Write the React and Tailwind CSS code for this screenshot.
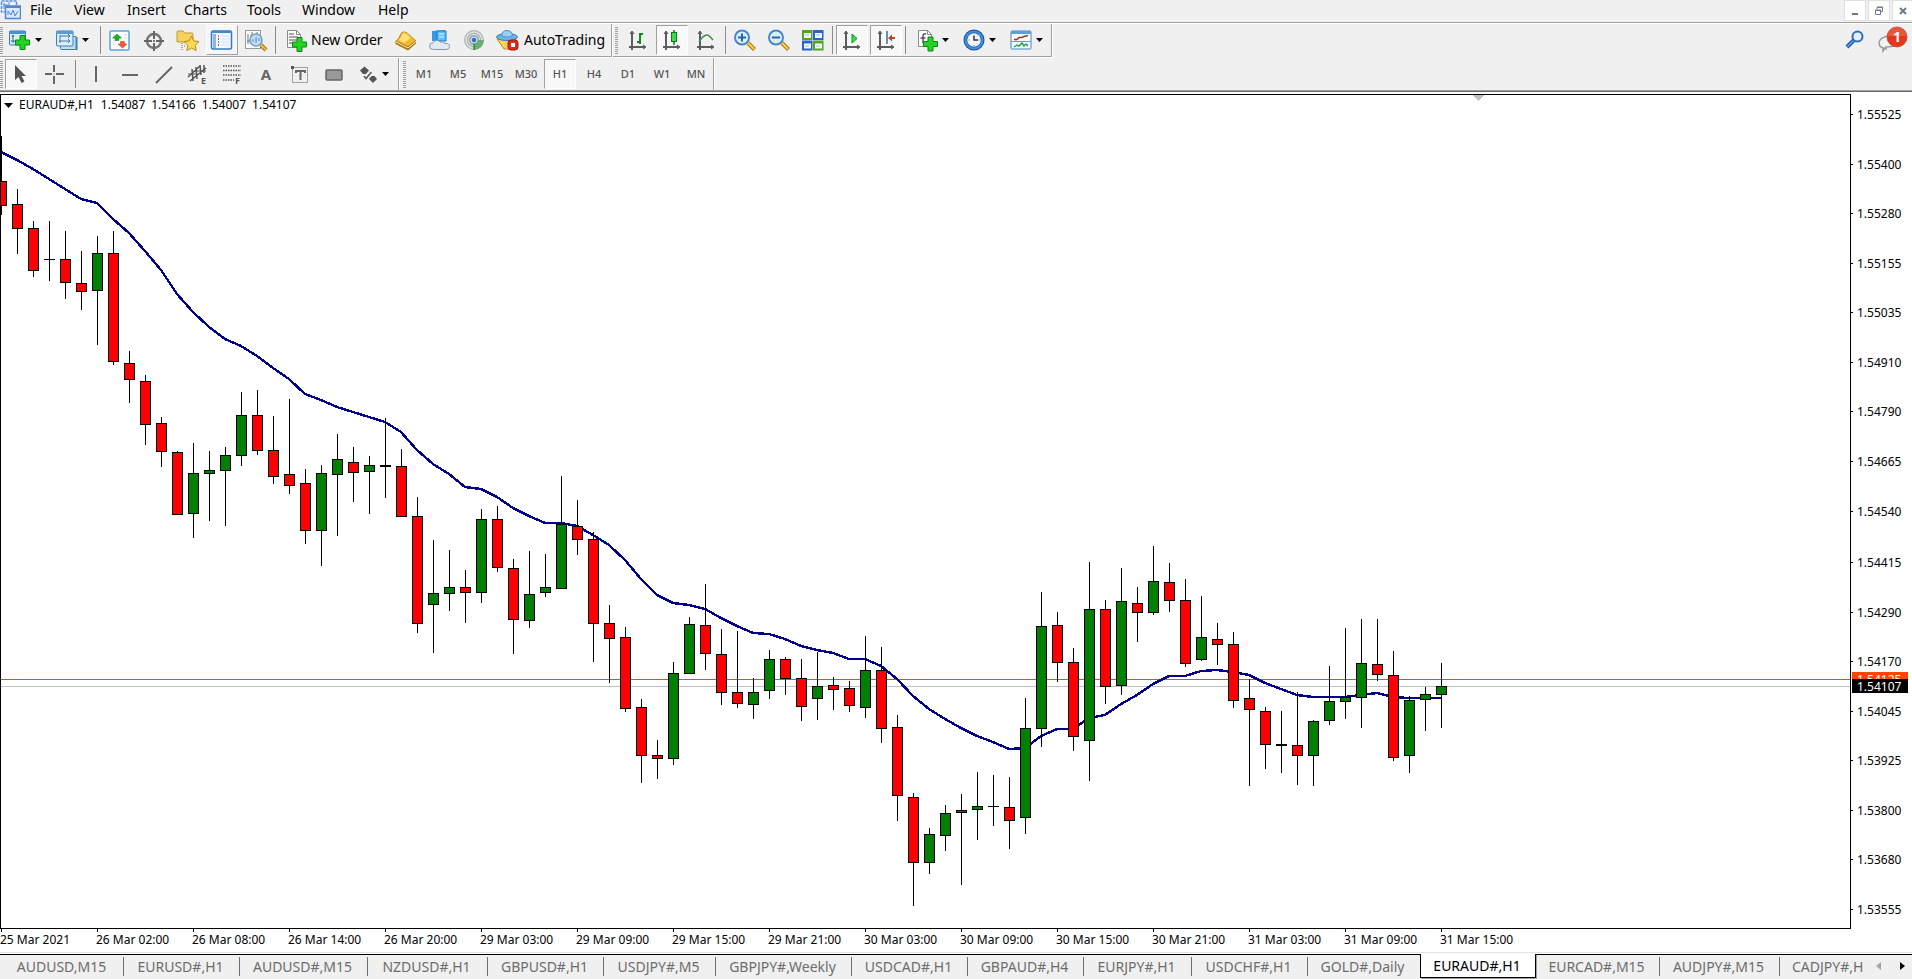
import React from 'react';
import clsx from 'clsx';

const MENU = [
  { label: 'File', width: 'w-[44px]' },
  { label: 'View', width: 'w-[53px]' },
  { label: 'Insert', width: 'w-[57px]' },
  { label: 'Charts', width: 'w-[63px]' },
  { label: 'Tools', width: 'w-[55px]' },
  { label: 'Window', width: 'w-[76px]' },
  { label: 'Help', width: 'w-[40px]' },
];

const TIMEFRAMES = ['M1', 'M5', 'M15', 'M30', 'H1', 'H4', 'D1', 'W1', 'MN'];

const TABS = [
  { label: 'AUDUSD,M15', width: 'w-[122px]' },
  { label: 'EURUSD#,H1', width: 'w-[116px]' },
  { label: 'AUDUSD#,M15', width: 'w-[128px]' },
  { label: 'NZDUSD#,H1', width: 'w-[120px]' },
  { label: 'GBPUSD#,H1', width: 'w-[116px]' },
  { label: 'USDJPY#,M5', width: 'w-[112px]' },
  { label: 'GBPJPY#,Weekly', width: 'w-[136px]' },
  { label: 'USDCAD#,H1', width: 'w-[116px]' },
  { label: 'GBPAUD#,H4', width: 'w-[116px]' },
  { label: 'EURJPY#,H1', width: 'w-[108px]' },
  { label: 'USDCHF#,H1', width: 'w-[116px]' },
  { label: 'GOLD#,Daily', width: 'w-[112px]' },
  { label: 'EURAUD#,H1', width: 'w-[116px]', active: true },
  { label: 'EURCAD#,M15', width: 'w-[124px]' },
  { label: 'AUDJPY#,M15', width: 'w-[120px]' },
];

const TIMES = [
  '25 Mar 2021', '26 Mar 02:00', '26 Mar 08:00', '26 Mar 14:00', '26 Mar 20:00',
  '29 Mar 03:00', '29 Mar 09:00', '29 Mar 15:00', '29 Mar 21:00', '30 Mar 03:00',
  '30 Mar 09:00', '30 Mar 15:00', '30 Mar 21:00', '31 Mar 03:00', '31 Mar 09:00',
  '31 Mar 15:00',
];

const PRICES = [
  ['1.55525', 114], ['1.55400', 164], ['1.55280', 213], ['1.55155', 263],
  ['1.55035', 312], ['1.54910', 362], ['1.54790', 411], ['1.54665', 461],
  ['1.54540', 511], ['1.54415', 562], ['1.54290', 612], ['1.54170', 661],
  ['1.54045', 711], ['1.53925', 760], ['1.53800', 810], ['1.53680', 859],
  ['1.53555', 909],
];

const STEP = 16;
const CHART_TOP = 94;

// high, body top, body bottom, low, direction (r = down, g = up)
const CANDLES = [
  [136, 181, 206, 215, 'r'], [189, 204, 229, 254, 'r'], [221, 228, 271, 277, 'r'],
  [221, 259, 260, 281, 'r'], [231, 259, 283, 299, 'r'], [251, 283, 292, 310, 'r'],
  [236, 253, 291, 345, 'g'], [231, 253, 362, 365, 'r'], [351, 363, 380, 403, 'r'],
  [375, 381, 425, 445, 'r'], [417, 423, 452, 467, 'r'], [451, 452, 515, 515, 'r'],
  [443, 473, 514, 538, 'g'], [451, 470, 474, 521, 'g'], [447, 455, 471, 526, 'g'],
  [392, 415, 456, 466, 'g'], [390, 415, 451, 455, 'r'], [416, 450, 477, 484, 'r'],
  [399, 474, 486, 494, 'r'], [469, 483, 531, 544, 'r'], [465, 473, 531, 566, 'g'],
  [434, 459, 475, 536, 'g'], [447, 462, 473, 502, 'r'], [456, 465, 472, 514, 'g'],
  [418, 465, 467, 498, 'r'], [449, 466, 517, 517, 'r'], [497, 516, 624, 633, 'r'],
  [540, 593, 605, 653, 'g'], [550, 587, 594, 611, 'g'], [570, 587, 593, 623, 'r'],
  [509, 519, 593, 603, 'g'], [506, 519, 568, 572, 'r'], [559, 568, 620, 654, 'r'],
  [551, 594, 621, 628, 'g'], [554, 587, 593, 597, 'g'], [476, 524, 589, 589, 'g'],
  [500, 526, 540, 555, 'r'], [532, 539, 624, 662, 'r'], [605, 623, 639, 683, 'r'],
  [627, 637, 709, 712, 'r'], [699, 707, 756, 783, 'r'], [740, 755, 759, 779, 'r'],
  [662, 673, 759, 765, 'g'], [617, 624, 674, 674, 'g'], [584, 625, 654, 670, 'r'],
  [629, 654, 693, 705, 'r'], [631, 692, 704, 708, 'r'], [678, 692, 705, 719, 'g'],
  [650, 659, 691, 699, 'g'], [657, 659, 679, 695, 'r'], [659, 678, 707, 721, 'r'],
  [652, 686, 699, 720, 'g'], [677, 685, 690, 710, 'r'], [681, 688, 706, 712, 'r'],
  [636, 670, 708, 718, 'g'], [647, 670, 729, 743, 'r'], [715, 727, 796, 821, 'r'],
  [793, 797, 863, 906, 'r'], [828, 834, 863, 874, 'g'], [805, 813, 836, 851, 'g'],
  [794, 810, 813, 885, 'g'], [772, 806, 810, 840, 'g'], [775, 806, 807, 826, 'g'],
  [777, 807, 821, 849, 'r'], [698, 728, 818, 834, 'g'], [592, 626, 729, 747, 'g'],
  [612, 625, 663, 682, 'r'], [648, 662, 737, 751, 'r'], [562, 609, 741, 781, 'g'],
  [600, 609, 687, 704, 'r'], [568, 601, 686, 695, 'g'], [587, 603, 613, 642, 'r'],
  [546, 581, 613, 615, 'g'], [563, 582, 601, 612, 'r'], [579, 600, 664, 667, 'r'],
  [596, 637, 660, 661, 'g'], [623, 639, 645, 665, 'r'], [632, 644, 701, 708, 'r'],
  [679, 698, 710, 786, 'r'], [707, 711, 745, 769, 'r'], [711, 744, 746, 773, 'r'],
  [692, 745, 756, 785, 'r'], [720, 721, 756, 786, 'g'], [666, 701, 721, 725, 'g'],
  [628, 697, 702, 719, 'g'], [619, 663, 698, 728, 'g'], [619, 664, 675, 681, 'r'],
  [651, 675, 758, 761, 'r'], [696, 700, 756, 773, 'g'], [687, 694, 700, 731, 'g'],
  [663, 686, 695, 728, 'g'],
];

// moving average, one value per candle
const AVERAGE = [
  152, 160, 169, 179, 189, 199, 203, 219, 233, 251, 270, 294, 312, 327, 339, 346,
  356, 368, 379, 394, 400, 407, 412, 417, 422, 432, 450, 464, 474, 487, 489, 497,
  508, 516, 523, 523, 526, 535, 545, 560, 579, 595, 603, 605, 609, 618, 626, 633,
  634, 639, 646, 650, 653, 659, 659, 666, 679, 696, 709, 719, 728, 736, 742, 749,
  748, 736, 729, 729, 718, 715, 704, 695, 684, 676, 676, 671, 670, 672, 675, 683,
  689, 695, 697, 697, 697, 695, 693, 697, 698, 698, 698,
];

function Icon({ children }) {
  return (
    <svg className="block shrink-0" width="24" height="24" viewBox="0 0 24 24" fill="none" aria-hidden="true">
      {children}
    </svg>
  );
}

function Plus({ x, y }) {
  return (
    <path
      transform={`translate(${x} ${y})`}
      d="M5 .5h5v4.5h4.500v5H10v4.500H5V10H.5V5H5z"
      fill="#22d322"
      stroke="#0b8a12"
    />
  );
}

function Axes() {
  return (
    <g stroke="#5c5c5c" strokeWidth="2">
      <path d="M6 4v18M3 19h16" />
      <path d="M4 6l2-3 2 3M17 17l3 2-3 2" strokeWidth="1" fill="#5c5c5c" />
    </g>
  );
}

/* Standard toolbar icons */

const NewChartIcon = () => (
  <Icon>
    <rect x=".5" y="3" width="16" height="14" rx="1" fill="#d9ecfb" stroke="#3b7dbd" />
    <path d="M0 4.500h17" stroke="#4a90d0" strokeWidth="3" />
    <path d="M4 7v8M2 13h11M3 9l1-2 1 2" stroke="#3b6f9f" />
    <Plus x={6} y={7} />
  </Icon>
);

const ProfilesIcon = () => (
  <Icon>
    <rect x="4.500" y="8.500" width="16" height="13" rx="1" fill="#c4def4" stroke="#3b7dbd" />
    <rect x=".5" y="3" width="16.500" height="15" rx="1" fill="#dceefb" stroke="#3b7dbd" />
    <path d="M0 4.500h17" stroke="#5b9bd5" strokeWidth="3" />
    <path d="M4 7v8M3 13h11M4 8h9M12 6l2 2-2 2M12 11l2 2-2 2" stroke="#3f78ab" />
    <path d="M20.500 9v13" stroke="#3b7dbd" strokeWidth="2" />
  </Icon>
);

const MarketWatchIcon = () => (
  <Icon>
    <rect x="2" y="3" width="19" height="19" rx="1" fill="#fff" stroke="#5ba3dd" strokeWidth="1.500" />
    <path d="M5 7h2M5 10h2M5 13h2M5 16h2M16 7h3M16 10h3" stroke="#c9d6e4" />
    <path d="M9 6l4.500 4H11v2.500H7V10H4.500z" fill="#18b428" stroke="#0a7d18" strokeWidth=".5" />
    <path d="M14.500 20l4.500-4h-2.500v-2.500h-4V16H10z" fill="#f0583a" stroke="#c02d14" strokeWidth=".5" />
  </Icon>
);

const DataWindowIcon = () => (
  <Icon>
    <circle cx="12" cy="13" r="7" stroke="#757575" strokeWidth="2.500" />
    <path d="M12 3v8M12 15v8M2 13h8M14 13h8" stroke="#666" strokeWidth="2" />
    <path d="M12 12v2" stroke="#777" strokeWidth="2" />
  </Icon>
);

const FavoritesIcon = () => (
  <Icon>
    <path d="M1 4q0-1 1-1h5l1.500 2H16q1 0 1 1v8H1z" fill="#f5d25e" stroke="#c39a2b" />
    <path d="M6 15v7M8 18h2" stroke="#666" strokeDasharray="1 1" />
    <path
      d="M15.500 8l2.300 4.900 5.200.7-3.800 3.700 1 5.300-4.700-2.600-4.700 2.600 1-5.300L8 13.600l5.200-.7z"
      fill="#ffd94f"
      stroke="#b98b16"
    />
  </Icon>
);

const NavigatorIcon = () => (
  <Icon>
    <rect x="1.500" y="3" width="20" height="18" rx="1.500" fill="#f3f9ff" stroke="#2f7cc4" strokeWidth="1.500" />
    <path d="M1 4h21" stroke="#3f8ad0" strokeWidth="2" />
    <path d="M3 6h3v14H3z" fill="#8fb7dd" />
    <path d="M8 8h1M8 14h1" stroke="#e33" strokeWidth="1.500" />
    <path d="M8 11h1M8 17h1" stroke="#333" strokeWidth="1.500" />
    <path d="M11 8h8M11 11h8M11 14h8M11 17h8" stroke="#d5e3f0" />
  </Icon>
);

const TesterIcon = () => (
  <Icon>
    <rect x="1.500" y="2.500" width="15" height="18" fill="#fafafa" stroke="#999" />
    <path d="M4 6v10M6 8h2M13 4v9M3 13h3M8 4v4" stroke="#777" />
    <path d="M17 17l5 5" stroke="#a3741a" strokeWidth="4" />
    <path d="M16 16l6 6" stroke="#f0c040" strokeWidth="2" />
    <circle cx="12" cy="12" r="6" fill="#b9dcf6" fillOpacity=".85" stroke="#6f9ecb" strokeWidth="1.500" />
    <path d="M9 14v-3M12 15V9M15 13v-3" stroke="#5a86b3" />
  </Icon>
);

const NewOrderIcon = () => (
  <Icon>
    <path d="M4.500 2.500h9l4 4v13h-13z" fill="#fcfcfc" stroke="#8a8a8a" />
    <path d="M13.500 2.500v4h4" stroke="#8a8a8a" />
    <path d="M6 6h5M6 9h9M6 12h8M6 15h5" stroke="#8a8a8a" strokeWidth="1.500" />
    <Plus x={9} y={9} />
  </Icon>
);

const MetaEditorIcon = () => (
  <Icon>
    <path d="M9 3.500q2 0 4 1l9 8v3l-8 7L1.500 16v-3q3-2 4.500-6 1-3 3-3.500z" fill="#a8740c" />
    <path d="M9 4q2 0 4 1l8.500 7.500-7.500 6L2.500 13Q5 11 6.500 7.500 7.500 4.500 9 4z" fill="#eeb92e" />
    <path d="M9.500 5q3 0 7 5l-6 5L5 12q2-2 3-5 .5-1.500 1.500-2z" fill="#fbe07c" />
    <path d="M2 14l12 6 8-6.500" stroke="#fff0b8" />
  </Icon>
);

const CloudIcon = () => (
  <Icon>
    <path d="M4 3l13-1v11H4z" fill="#2f9ae8" />
    <path d="M9 3h9v10H9z" fill="#5cc0ff" stroke="#1b79c4" />
    <path d="M11 6h5M11 9h5" stroke="#eaf7ff" />
    <path
      d="M5.500 21.500q-4 0-4-3.500 0-3 3.500-3.200 1.500-3.300 5-2.300 1.500 .5 2 1.500 3.500-1 5 1.500 4.500-.5 4.500 3 0 3-3.500 3z"
      fill="#e3e9f3"
      stroke="#8796b5"
    />
  </Icon>
);

const SignalsIcon = () => (
  <Icon>
    <circle cx="12" cy="12" r="10" fill="#aeb4b6" />
    <circle cx="12" cy="12" r="8" stroke="#dfe3e5" strokeWidth="1.500" />
    <circle cx="12" cy="12" r="5.500" fill="#9aa3aa" stroke="#dfe4e8" />
    <path d="M12 12h10q-1 9-10 10z" fill="#5da766" fillOpacity=".85" />
    <path d="M12 12v10" stroke="#2f8f3c" strokeWidth="1.500" />
    <circle cx="12" cy="12" r="3.500" fill="#c5d9f0" />
    <circle cx="12" cy="12" r="2.200" fill="#2f6fc0" />
  </Icon>
);

const AutoTradingIcon = () => (
  <Icon>
    <path d="M1 11h19l-3 10H8z" fill="#f6d257" stroke="#bd9122" />
    <ellipse cx="11" cy="9" rx="10.500" ry="3.500" fill="#6cb4e6" stroke="#3c7fb5" />
    <path d="M5.500 8Q6 2.500 11 2.500T16.500 8q-5 2.500-11 0z" fill="#9ad0f3" stroke="#4a90c8" />
    <rect x="12" y="12" width="10" height="10" rx="3" fill="#e02a1c" stroke="#a5150b" />
    <rect x="15" y="15" width="4" height="4" fill="#fff" />
  </Icon>
);

/* Chart toolbar icons */

const BarChartIcon = () => (
  <Icon>
    <Axes />
    <path d="M14 5v11M14 6h3M11 14h3" stroke="#0f8a22" strokeWidth="2" />
  </Icon>
);

const CandleChartIcon = () => (
  <Icon>
    <Axes />
    <path d="M14 2v15" stroke="#0a7d1a" strokeWidth="1.500" />
    <rect x="11.500" y="4.500" width="5" height="9" fill="#3ddc4f" stroke="#0a7d1a" />
  </Icon>
);

const LineChartIcon = () => (
  <Icon>
    <Axes />
    <path d="M5 14q4-7 8-7 2 0 6 5" stroke="#3f8f4c" strokeWidth="1.500" />
  </Icon>
);

function ZoomIcon({ plus }) {
  return (
    <Icon>
      <path d="M15 15l6.500 6.500" stroke="#a87812" strokeWidth="4" />
      <path d="M15 15l6 6" stroke="#fbd44a" strokeWidth="2" />
      <circle cx="9" cy="9.500" r="7" fill="#d8efff" stroke="#4a86c5" strokeWidth="2" />
      <path d={plus ? 'M5 9.500h8M9 5.500v8' : 'M5 9.500h8'} stroke="#2565a8" strokeWidth="2" />
    </Icon>
  );
}

const TileIcon = () => (
  <Icon>
    <rect x="1" y="2" width="10.500" height="10" fill="#55a51c" />
    <rect x="12" y="2" width="10.500" height="10" fill="#2a62cf" />
    <rect x="1" y="12.500" width="10.500" height="10" fill="#2a62cf" />
    <rect x="12" y="12.500" width="10.500" height="10" fill="#55a51c" />
    <path d="M3 5h7v5H3zM14 5h7v5h-7zM3 15.500h7v5H3zM14 15.500h7v5h-7z" fill="#f4f8ff" />
    <path d="M4 7h4M15 7h4M4 18h4M15 18h4" stroke="#9fc0e8" />
  </Icon>
);

const AutoScrollIcon = () => (
  <Icon>
    <Axes />
    <path d="M12 6l5 4.500-5 4.500z" fill="#35e04a" stroke="#0d9220" />
  </Icon>
);

const ChartShiftIcon = () => (
  <Icon>
    <Axes />
    <path d="M13 3v13" stroke="#2b70b3" strokeWidth="1.500" />
    <path d="M14 10l4-3.500V9h3v2h-3v2.500z" fill="#c8421c" />
  </Icon>
);

const IndicatorsIcon = () => (
  <Icon>
    <path d="M2.500 2.500h9l4 4v12h-13z" fill="#fcfcfc" stroke="#8a8a8a" />
    <path d="M11.500 2.500v4h4" stroke="#8a8a8a" />
    <path d="M10 6q-3-1-3 2.500V15M4.500 10h5" stroke="#555" strokeWidth="1.500" />
    <Plus x={7} y={8.5} />
  </Icon>
);

const PeriodsIcon = () => (
  <Icon>
    <circle cx="11" cy="12" r="10.500" fill="#174f9c" />
    <circle cx="11" cy="12" r="8.500" stroke="#3d93e6" strokeWidth="2" />
    <circle cx="11" cy="12" r="6.800" fill="#f1f5f9" />
    <path d="M11 7.500v4.500h4" stroke="#333" strokeWidth="1.500" />
    <path d="M5.500 12h1M11 17v1M15.500 12h1" stroke="#777" />
  </Icon>
);

const TemplatesIcon = () => (
  <Icon>
    <rect x="1" y="3" width="20" height="18" rx="1" fill="#f6fbff" stroke="#3c86c9" />
    <path d="M1 4.500h20" stroke="#5b9fdc" strokeWidth="3" />
    <path d="M1 13.500h20" stroke="#5b9fdc" />
    <path d="M4 11.500h3l2-2h3l2-1 4-1" stroke="#8e3b1c" strokeWidth="1.500" />
    <path d="M4 19l3-2 2 1 3-3 2 3 2-2 2 2" stroke="#3d9a45" strokeWidth="1.500" />
  </Icon>
);

/* Line studies icons */

const CursorIcon = () => (
  <Icon>
    <path d="M6 3v15l3.500-3 3 6 3-1.500-3-5.500H17z" fill="#555" />
  </Icon>
);

const CrosshairIcon = () => (
  <Icon>
    <path d="M11 3v7M11 14v8M2 12h7M13 12h8" stroke="#666" strokeWidth="2" />
    <path d="M11 11.500v1" stroke="#666" />
  </Icon>
);

const VerticalLineIcon = () => (
  <Icon>
    <path d="M12 4v16" stroke="#666" strokeWidth="2" />
  </Icon>
);

const HorizontalLineIcon = () => (
  <Icon>
    <path d="M4 13h16" stroke="#666" strokeWidth="2" />
  </Icon>
);

const TrendlineIcon = () => (
  <Icon>
    <path d="M4 21L20 5" stroke="#666" strokeWidth="2" />
  </Icon>
);

const smallLetter = "font-['Noto_Sans',sans-serif] text-[9px] font-bold";

const ChannelIcon = () => (
  <Icon>
    <path d="M2 15L14 4M4 19L20 6M6 7l1 12M10 5l1 12M14 3l1 10M18 3v8" stroke="#555" strokeWidth="1.500" />
    <path d="M2 12h8M8 9h12" stroke="#555" />
    <text x="15" y="22" fill="#555" className={smallLetter}>E</text>
  </Icon>
);

const FibonacciIcon = () => (
  <Icon>
    <path d="M3 4h18M3 8.500h18M3 13h18M3 18h11" stroke="#555" strokeWidth="1.500" strokeDasharray="1.500 1" />
    <text x="15" y="22" fill="#555" className={smallLetter}>F</text>
  </Icon>
);

const TextIcon = () => (
  <Icon>
    <text x="12" y="18" textAnchor="middle" fill="#666" className="font-['Noto_Sans',sans-serif] text-[15px] font-bold">A</text>
  </Icon>
);

const TextLabelIcon = () => (
  <Icon>
    <rect x="4.500" y="5.500" width="15" height="15" stroke="#555" strokeDasharray="1 1" />
    <path d="M3 4h3v3H3z" fill="#555" />
    <path d="M8 9h9M12.500 9v9M8 8v3M17 8v3" stroke="#666" strokeWidth="2" />
  </Icon>
);

const RectangleIcon = () => (
  <Icon>
    <rect x="4" y="8" width="16" height="10" rx="1" fill="#999" stroke="#666" strokeWidth="1.500" />
  </Icon>
);

const ArrowsIcon = () => (
  <Icon>
    <path d="M8.500 4.500L13 8.500l-3 3.500H7L4 8.500z" fill="#555" />
    <path d="M17 21l-4-4 2.500-3h3l2.500 3z" fill="#555" />
    <path d="M8 14l2 2.500L15.500 10" stroke="#555" strokeWidth="1.500" />
  </Icon>
);

function Caret() {
  return (
    <svg className="block shrink-0" width="7" height="4" viewBox="0 0 7 4" aria-hidden="true">
      <path d="M0 0h7L3.500 4z" fill="#000" />
    </svg>
  );
}

/* Toolbar pieces */

function Grip() {
  return (
    <div className="h-[27px] w-[3px] shrink-0 bg-[repeating-linear-gradient(to_bottom,#a0a0a0_0_1px,transparent_1px_2px)]" />
  );
}

function Separator({ wide }) {
  return <div className={clsx('h-[28px] w-px shrink-0 bg-[#8c8c8c]', wide ? 'mx-[2px]' : 'mx-px')} />;
}

function ToolButton({ label, pressed, raised, children }) {
  return (
    <button
      type="button"
      aria-label={label}
      aria-pressed={pressed}
      className={clsx(
        'flex h-[30px] w-8 shrink-0 items-center justify-center border',
        pressed && 'border-t-[#a0a0a0] border-r-white border-b-white border-l-[#a0a0a0] bg-[#f8f8f8]',
        raised && 'border-t-white border-r-[#a0a0a0] border-b-[#a0a0a0] border-l-white bg-[#f6f6f6]',
        !pressed && !raised && 'border-transparent',
      )}
    >
      {children}
    </button>
  );
}

function DropButton({ label, children }) {
  return (
    <button type="button" aria-label={label} className="flex h-[30px] w-[45px] shrink-0 items-center gap-[2px] pl-1">
      {children}
      <Caret />
    </button>
  );
}

function TextButton({ width, children }) {
  return (
    <button type="button" className={clsx('flex h-[30px] shrink-0 items-center gap-1 pl-1 text-sm whitespace-nowrap', width)}>
      {children}
    </button>
  );
}

function MenuBar() {
  return (
    <header className="flex h-[22px] items-start">
      <svg className="mr-[9px] block shrink-0" width="21" height="20" viewBox="0 0 21 20" aria-hidden="true">
        <rect x="1.500" y="1" width="15" height="11" fill="#e9f2fd" stroke="#5b8fe0" strokeWidth="1.500" strokeDasharray="3 1" />
        <path d="M4 3v6M3 5h5M9 2v4" stroke="#5b8fe0" />
        <rect x="5.500" y="6" width="15" height="12.500" fill="#dbe9fc" stroke="#4f86dc" strokeWidth="1.500" />
        <path d="M5 7h15" stroke="#4f86dc" strokeWidth="2" />
        <path d="M8 15v-4l3 4 2-5 2 6 3-5" stroke="#4f86dc" fill="none" />
      </svg>
      <nav className="flex">
        {MENU.map((item) => (
          <button key={item.label} type="button" className={clsx('text-left text-sm', item.width)}>
            {item.label}
          </button>
        ))}
      </nav>
      <div className="ml-auto flex gap-[2px]">
        <button type="button" aria-label="Minimize" className="flex h-[21px] w-[22px] items-center justify-center border border-[#e0e0e0] bg-white">
          <svg width="10" height="10" viewBox="0 0 10 10"><path d="M2 7h6v2H2z" fill="#6b7a8a" /></svg>
        </button>
        <button type="button" aria-label="Restore" className="flex h-[21px] w-[22px] items-center justify-center border border-[#e0e0e0] bg-white">
          <svg width="10" height="10" viewBox="0 0 10 10" fill="none" stroke="#6b7a8a">
            <path d="M3 3V1.500h5.500v4H7M3 1h6" />
            <path d="M1.500 4.500h5v4h-5zM1 4h6" />
          </svg>
        </button>
        <button type="button" aria-label="Close" className="flex h-[21px] w-[20px] items-center justify-center border border-r-0 border-[#e0e0e0] bg-white">
          <svg width="10" height="10" viewBox="0 0 10 10"><path d="M2 2l6 6M8 2L2 8" stroke="#6b7a8a" strokeWidth="2" /></svg>
        </button>
      </div>
    </header>
  );
}

function StandardToolbar() {
  return (
    <div className="flex h-[34px] items-start">
      <div className="flex h-[33px] w-[612px] shrink-0 items-center gap-[2px] border-r border-b border-[#a0a0a0] shadow-[1px_1px_0_#fff]">
        <Grip />
        <DropButton label="New chart"><NewChartIcon /></DropButton>
        <DropButton label="Profiles"><ProfilesIcon /></DropButton>
        <Separator />
        <ToolButton label="Market Watch"><MarketWatchIcon /></ToolButton>
        <ToolButton label="Data Window"><DataWindowIcon /></ToolButton>
        <ToolButton label="Favorites"><FavoritesIcon /></ToolButton>
        <ToolButton label="Navigator" raised><NavigatorIcon /></ToolButton>
        <ToolButton label="Strategy Tester"><TesterIcon /></ToolButton>
        <Separator />
        <TextButton width="w-[109px]"><NewOrderIcon />New Order</TextButton>
        <ToolButton label="MetaEditor"><MetaEditorIcon /></ToolButton>
        <ToolButton label="Cloud"><CloudIcon /></ToolButton>
        <ToolButton label="Signals"><SignalsIcon /></ToolButton>
        <TextButton width="w-[117px]"><AutoTradingIcon />AutoTrading</TextButton>
      </div>
      <div className="ml-px flex h-[33px] w-[439px] shrink-0 items-center gap-[2px] border-r border-b border-[#a0a0a0] pl-[2px] shadow-[1px_1px_0_#fff]">
        <Grip />
        <div className="ml-[2px] flex items-center gap-[2px]">
          <ToolButton label="Bar chart"><BarChartIcon /></ToolButton>
          <ToolButton label="Candlesticks" pressed><CandleChartIcon /></ToolButton>
          <ToolButton label="Line chart"><LineChartIcon /></ToolButton>
          <Separator />
          <ToolButton label="Zoom in"><ZoomIcon plus /></ToolButton>
          <ToolButton label="Zoom out"><ZoomIcon /></ToolButton>
          <ToolButton label="Tile windows"><TileIcon /></ToolButton>
          <Separator />
          <ToolButton label="Auto scroll" pressed><AutoScrollIcon /></ToolButton>
          <ToolButton label="Chart shift" pressed><ChartShiftIcon /></ToolButton>
          <Separator />
        </div>
        <div className="ml-[3px] flex items-center gap-[2px]">
          <DropButton label="Indicators"><IndicatorsIcon /></DropButton>
          <DropButton label="Periods"><PeriodsIcon /></DropButton>
          <DropButton label="Templates"><TemplatesIcon /></DropButton>
        </div>
      </div>
      <div className="ml-auto flex h-8 items-center gap-3 pr-[3px]">
        <button type="button" aria-label="Search">
          <svg className="block" width="20" height="20" viewBox="0 0 20 20" fill="none">
            <path d="M2 17l7-7" stroke="#2259a8" strokeWidth="4" />
            <path d="M2.500 16.500l6-6" stroke="#6aa5ea" strokeWidth="1.500" />
            <circle cx="12.500" cy="6.500" r="5" fill="#e3effc" stroke="#2f6cc0" strokeWidth="2" />
          </svg>
        </button>
        <button type="button" aria-label="Notifications">
          <svg className="block" width="32" height="28" viewBox="0 0 32 28" fill="none">
            <path d="M10 23q-8-1-8-6t9-7h6v10q-5 1-8 1l-3 4v-4" fill="#f2f2f2" stroke="#9b9b9b" strokeWidth="1.500" />
            <circle cx="20" cy="11" r="10" fill="#e3371b" stroke="#b94a38" strokeWidth=".8" />
            <path d="M11 10a9 9 0 0 1 18 0z" fill="#ee6a50" fillOpacity=".6" />
            <text x="20" y="16" textAnchor="middle" fill="#fff" className="font-['Noto_Sans',sans-serif] text-sm font-bold">1</text>
          </svg>
        </button>
      </div>
    </div>
  );
}

function DrawingToolbar() {
  return (
    <div className="flex h-8">
      <div className="flex w-[399px] shrink-0 items-center gap-[2px] border-r border-[#a0a0a0] shadow-[1px_0_0_#fff]">
        <Grip />
        <ToolButton label="Cursor" pressed><CursorIcon /></ToolButton>
        <ToolButton label="Crosshair"><CrosshairIcon /></ToolButton>
        <Separator wide />
        <ToolButton label="Vertical line"><VerticalLineIcon /></ToolButton>
        <ToolButton label="Horizontal line"><HorizontalLineIcon /></ToolButton>
        <ToolButton label="Trendline"><TrendlineIcon /></ToolButton>
        <ToolButton label="Equidistant channel"><ChannelIcon /></ToolButton>
        <ToolButton label="Fibonacci retracement"><FibonacciIcon /></ToolButton>
        <ToolButton label="Text"><TextIcon /></ToolButton>
        <ToolButton label="Text label"><TextLabelIcon /></ToolButton>
        <ToolButton label="Rectangle"><RectangleIcon /></ToolButton>
        <DropButton label="Arrows"><ArrowsIcon /></DropButton>
      </div>
      <div className="ml-px flex w-[314px] shrink-0 items-center gap-[2px] border-r border-[#a0a0a0] pl-[3px] shadow-[1px_0_0_#fff]">
        <Grip />
        {TIMEFRAMES.map((tf) => (
          <ToolButton key={tf} label={tf} pressed={tf === 'H1'}>
            <span className="pt-px text-[11px] font-medium text-[#555]">{tf}</span>
          </ToolButton>
        ))}
      </div>
    </div>
  );
}

function Plot() {
  const points = AVERAGE.map((y, i) => `${1 + i * STEP},${y}`).join(' ');

  return (
    <div className="relative min-w-0 flex-1 overflow-hidden border border-black">
      <svg className="block h-[833px] w-full" shapeRendering="crispEdges">
        <g transform={`translate(-1 ${-CHART_TOP - 1})`}>
          <path d="M1473 95h11l-5.500 6z" fill="#c0c0c0" />
          <rect x="1" y="686" width="100%" height="1" fill="#c0c0c0" />
          <rect x="1" y="679" width="100%" height="1" fill="#ff4500" />
          <polyline points={points} fill="none" stroke="#00008b" strokeWidth="2.4" />
          {CANDLES.map(([high, top, bottom, low, dir], i) => {
            const x = 1 + i * STEP;
            return (
              <g key={x}>
                <rect x={x} y={high} width="1" height={low - high} fill="#000" />
                <rect x={x - 5} y={top} width="11" height={bottom - top} fill="#000" />
                {bottom - top > 2 && (
                  <rect
                    x={x - 4}
                    y={top + 1}
                    width="9"
                    height={bottom - top - 2}
                    fill={dir === 'g' ? '#008000' : '#ff0000'}
                  />
                )}
              </g>
            );
          })}
        </g>
      </svg>
      {/* Symbol and OHLC line over the chart */}
      <div className="absolute top-0 left-[3px] flex h-5 items-center text-xs">
        <svg className="mr-[6px] block" width="9" height="5" viewBox="0 0 9 5" aria-hidden="true">
          <path d="M0 0h9L4.500 5z" fill="#000" />
        </svg>
        <span className="mr-[7px]">EURAUD#,H1</span>
        <span className="flex gap-[6px]">
          <span>1.54087</span>
          <span>1.54166</span>
          <span>1.54007</span>
          <span>1.54107</span>
        </span>
      </div>
    </div>
  );
}

function PriceScale() {
  return (
    <svg className="block h-[835px] w-[61px] shrink-0 font-['Noto_Sans',sans-serif] text-xs">
      <g transform={`translate(0 ${-CHART_TOP})`}>
        {PRICES.map(([label, y]) => (
          <g key={label}>
            <rect x="0" y={y} width="2" height="1" fill="#000" />
            <text x="6" y={y + 5}>{label}</text>
          </g>
        ))}
        <rect x="1" y="672" width="56" height="14" fill="#ff4500" />
        <text x="6" y="684" fill="#fff">1.54125</text>
        <rect x="1" y="679" width="56" height="14" fill="#000" />
        <text x="6" y="691" fill="#fff">1.54107</text>
      </g>
    </svg>
  );
}

function TimeScale() {
  return (
    <div className="flex h-[23px] overflow-hidden">
      {TIMES.map((time) => (
        <div key={time} className="w-24 shrink-0 text-xs">
          <div className="ml-px h-[3px] w-px bg-black" />
          <div className="whitespace-nowrap">{time}</div>
        </div>
      ))}
    </div>
  );
}

function ChartTabs() {
  return (
    <nav className="flex h-[25px] border-t border-black bg-[#f0f0f0] pl-[2px] text-sm text-[#6d6d6d]">
      <div className="flex min-w-0 flex-1 overflow-x-clip">
        {TABS.map((tab, i) =>
          tab.active ? (
            <button
              key={tab.label}
              type="button"
              className={clsx('-mt-px h-6 shrink-0 border border-t-0 border-black bg-white pr-[2px] text-black shadow-[1px_1px_0_#a0a0a0]', tab.width)}
            >
              {tab.label}
            </button>
          ) : (
            <button
              key={tab.label}
              type="button"
              className={clsx(
                'mt-[2px] h-[19px] shrink-0 border-r pr-[2px] leading-[18px]',
                TABS[i + 1]?.active ? 'border-transparent' : 'border-[#6d6d6d]',
                tab.width,
              )}
            >
              {tab.label}
            </button>
          ),
        )}
        <button type="button" className="mt-[2px] h-[19px] min-w-0 flex-1 overflow-hidden pl-3 text-left leading-[18px] whitespace-nowrap">
          CADJPY#,H
        </button>
      </div>
      <button type="button" aria-label="Scroll tabs left" className="flex h-[21px] w-4 items-center justify-center">
        <svg width="5" height="8" viewBox="0 0 5 8"><path d="M5 0v8L0 4z" fill="#a5a5a5" /></svg>
      </button>
      <button type="button" aria-label="Scroll tabs right" className="mr-[2px] ml-2 flex h-[21px] w-4 items-center justify-center">
        <svg width="5" height="8" viewBox="0 0 5 8"><path d="M0 0v8l5-4z" fill="#000" /></svg>
      </button>
    </nav>
  );
}

export default function App() {
  return (
    <div className="flex min-h-screen w-full flex-col overflow-x-hidden bg-[#f0f0f0] font-['Noto_Sans',sans-serif] text-black">
      <MenuBar />
      <div className="border-t border-[#a0a0a0]">
        <div className="border-t border-white">
          <StandardToolbar />
          <DrawingToolbar />
        </div>
      </div>
      <main className="flex-1 border-t border-[#a0a0a0] bg-white">
        <div className="border-t border-[#696969] pt-[2px]">
          <div className="flex">
            <Plot />
            <PriceScale />
          </div>
          <TimeScale />
          <div className="mb-px h-px bg-[#e3e3e3]" />
        </div>
      </main>
      <ChartTabs />
    </div>
  );
}
